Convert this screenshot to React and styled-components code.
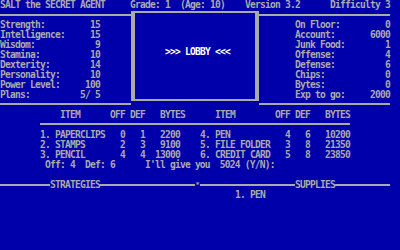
import React from "react";
import styled, { createGlobalStyle } from "styled-components";

const GlobalStyle = createGlobalStyle`
  html, body {
    margin: 0;
    padding: 0;
    background: #0000aa;
  }
  body {
    width: 400px;
    height: 250px;
    overflow: hidden;
  }
`;

const leftStats = [
  ["Strength:", "15"],
  ["Intelligence:", "15"],
  ["Wisdom:", "9"],
  ["Stamina:", "10"],
  ["Dexterity:", "14"],
  ["Personality:", "10"],
  ["Power Level:", "100"],
  ["Plans:", "5/ 5"],
];

const rightStats = [
  ["On Floor:", "0"],
  ["Account:", "6000"],
  ["Junk Food:", "1"],
  ["Offense:", "4"],
  ["Defense:", "6"],
  ["Chips:", "0"],
  ["Bytes:", "0"],
  ["Exp to go:", "2000"],
];

const items = [
  [
    { name: "1. PAPERCLIPS", off: 0, def: 1, bytes: 2200 },
    { name: "4. PEN", off: 4, def: 6, bytes: 10200 },
  ],
  [
    { name: "2. STAMPS", off: 2, def: 3, bytes: 9100 },
    { name: "5. FILE FOLDER", off: 3, def: 8, bytes: 21350 },
  ],
  [
    { name: "3. PENCIL", off: 4, def: 4, bytes: 13000 },
    { name: "6. CREDIT CARD", off: 5, def: 8, bytes: 23850 },
  ],
];

const Screen = styled.div`
  width: 400px;
  height: 250px;
  overflow: hidden;
  background: #0000aa;
  color: #aaaaaa;
  font-family: "DejaVu Sans Mono", "Liberation Mono", monospace;
  font-size: 9.6px;
  font-weight: bold;
  letter-spacing: -0.78px;
  line-height: 10px;
  white-space: pre;
`;

const TitleBar = styled.div`
  display: grid;
  grid-template-columns: 130px 115px 85px auto;
  height: 10px;
`;

const TopSection = styled.div`
  display: grid;
  grid-template-columns: 131px 128px 141px;
  height: 100px;
`;

const SidePanel = styled.div`
  align-self: start;
  margin-top: 4px;
  margin-right: ${(p) => p.$trim || 0}px;
  padding: 4px 0 3px ${(p) => p.$indent || 0}px;
  border-top: 2px solid #aaaaaa;
  border-bottom: 2px solid #aaaaaa;
`;

const StatRow = styled.div`
  display: flex;
  justify-content: space-between;
  width: ${(p) => p.$w}px;
  height: 10px;
`;

const LobbyBox = styled.div`
  box-sizing: border-box;
  height: 90px;
  margin-top: 1px;
  padding: 34px 0 0 30px;
  border-left: 4px solid #aaaaaa;
  border-right: 4px solid #aaaaaa;
  border-top: 2px solid #aaaaaa;
  border-bottom: 2px solid #aaaaaa;
  color: #ffffff;
`;

const Row = styled.div`
  display: flex;
  height: 10px;
  padding-left: ${(p) => p.$indent || 0}px;
`;

const Cell = styled.span`
  display: block;
  width: ${(p) => p.$w}px;
  flex: none;
`;

const TableRule = styled.div`
  width: 310px;
  height: 2px;
  margin: 3px 0 5px 40px;
  background: #aaaaaa;
`;

const ItemGroup = styled.div`
  display: grid;
  grid-template-columns: ${(p) => p.$nameW}px 15px 20px ${(p) => p.$bytesW}px;
  margin-right: ${(p) => p.$after || 0}px;
  & > span:not(:first-child) {
    text-align: right;
  }
`;

const Spacer = styled.div`
  height: 10px;
`;

const DividerRow = styled.div`
  display: grid;
  grid-template-columns: 200px 190px;
  height: 10px;
`;

const Divider = styled.div`
  display: flex;
  align-items: center;
`;

const Rule = styled.div`
  height: 2px;
  background: #aaaaaa;
  width: ${(p) => (p.$w ? `${p.$w}px` : "auto")};
  flex: ${(p) => (p.$w ? "none" : "1")};
`;

const Mark = styled.span`
  width: 5px;
  font-size: 7px;
  letter-spacing: 0;
  text-align: center;
`;

const StatList = ({ stats, width }) =>
  stats.map(([label, value]) => (
    <StatRow key={label} $w={width}>
      <span>{label}</span>
      <span>{value}</span>
    </StatRow>
  ));

const ItemCells = ({ item, nameW, bytesW, after }) => (
  <ItemGroup $nameW={nameW} $bytesW={bytesW} $after={after}>
    <span>{item.name}</span>
    <span>{item.off}</span>
    <span>{item.def}</span>
    <span>{item.bytes}</span>
  </ItemGroup>
);

const App = () => {
  return (
    <>
      <GlobalStyle />
      <Screen>
        <TitleBar>
          <span>SALT the SECRET AGENT</span>
          <span>Grade: 1  (Age: 10)</span>
          <span>Version 3.2</span>
          <span>Difficulty 3</span>
        </TitleBar>

        <TopSection>
          <SidePanel>
            <StatList stats={leftStats} width={100} />
          </SidePanel>
          <LobbyBox>{">>> LOBBY <<<"}</LobbyBox>
          <SidePanel $indent={36} $trim={10}>
            <StatList stats={rightStats} width={95} />
          </SidePanel>
        </TopSection>

        <Row>
          <Cell $w={60} />
          <Cell $w={50}>ITEM</Cell>
          <Cell $w={20}>OFF</Cell>
          <Cell $w={30}>DEF</Cell>
          <Cell $w={55}>BYTES</Cell>
          <Cell $w={60}>ITEM</Cell>
          <Cell $w={20}>OFF</Cell>
          <Cell $w={30}>DEF</Cell>
          <Cell $w={25}>BYTES</Cell>
        </Row>
        <TableRule />
        {items.map(([a, b]) => (
          <Row key={a.name} $indent={40}>
            <ItemCells item={a} nameW={70} bytesW={35} after={20} />
            <ItemCells item={b} nameW={75} bytesW={40} />
          </Row>
        ))}
        <Row $indent={45}>
          <span>{"Off: 4  Def: 6      I'll give you  5024 (Y/N):"}</span>
        </Row>

        <Spacer />

        <DividerRow>
          <Divider>
            <Rule $w={50} />
            <span>STRATEGIES</span>
            <Rule />
            <Mark>*</Mark>
          </Divider>
          <Divider>
            <Rule $w={95} />
            <span>SUPPLIES</span>
            <Rule />
          </Divider>
        </DividerRow>
        <Row $indent={235}>
          <span>1. PEN</span>
        </Row>
      </Screen>
    </>
  );
};

export default App;
